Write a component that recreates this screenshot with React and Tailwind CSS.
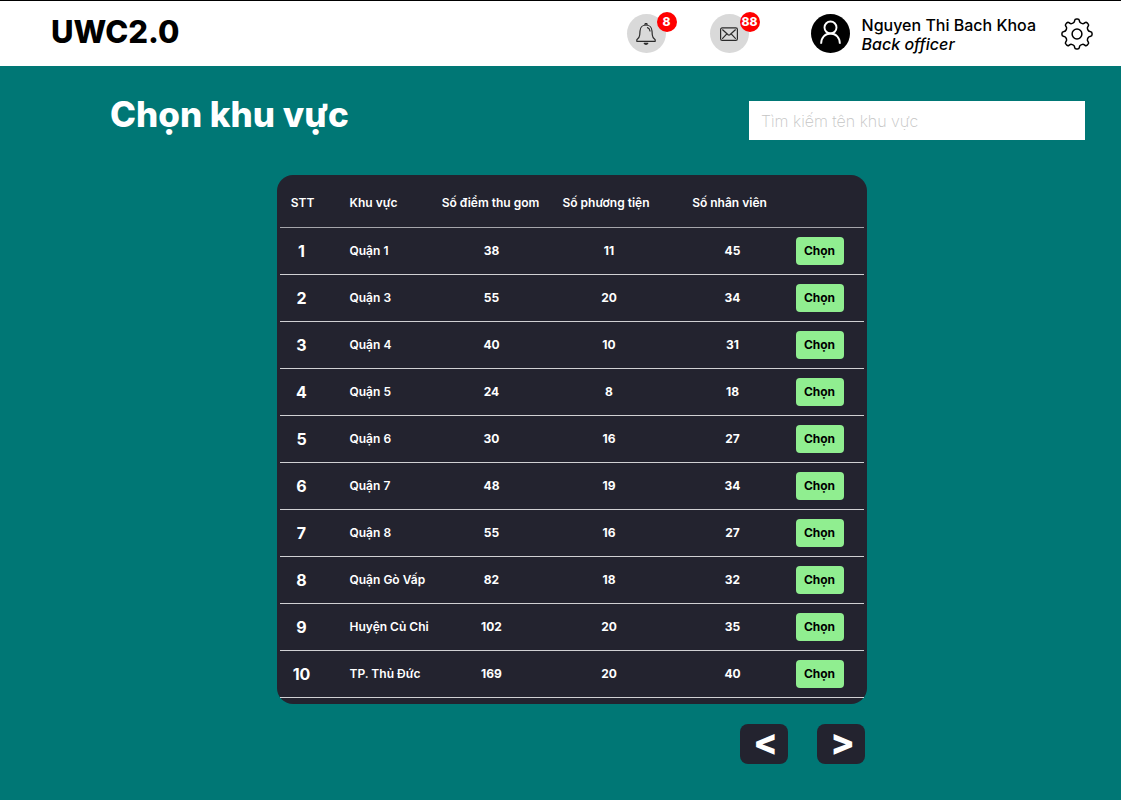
import React from "react";

const columns = ["Số điểm thu gom", "Số phương tiện", "Số nhân viên"];

const areas = [
  ["Quận 1", 38, 11, 45],
  ["Quận 3", 55, 20, 34],
  ["Quận 4", 40, 10, 31],
  ["Quận 5", 24, 8, 18],
  ["Quận 6", 30, 16, 27],
  ["Quận 7", 48, 19, 34],
  ["Quận 8", 55, 16, 27],
  ["Quận Gò Vấp", 82, 18, 32],
  ["Huyện Củ Chi", 102, 20, 35],
  ["TP. Thủ Đức", 169, 20, 40],
];

function BellIcon() {
  return (
    <svg viewBox="0 0 20 22" className="h-[22px] w-5" fill="none" stroke="#2b2b2b" strokeWidth="1.2" strokeLinejoin="round" strokeLinecap="round" aria-hidden="true">
      <path d="M9 1.900V1.300a1 1 0 0 1 2 0v.6" />
      <path d="M10 2C6.700 2 4.200 4.500 4 8l-.3 4C3.500 14.400 2.500 15.700.8 16.800v1.500h18.400v-1.500c-1.700-1.100-2.700-2.400-2.900-4.800L16 8c-.2-3.500-2.700-6-6-6Z" />
      <path d="M11.500 4.600c1.500.6 2.300 1.800 2.500 3.400" />
      <path d="M8.200 20.300c.6 1.300 3 1.300 3.600 0Z" />
    </svg>
  );
}

function MailIcon() {
  return (
    <svg viewBox="0 0 18 14" className="h-3.5 w-[18px]" fill="none" stroke="#2b2b2b" strokeWidth="1.2" strokeLinejoin="round" strokeLinecap="round" aria-hidden="true">
      <rect x=".6" y=".9" width="16.800" height="12.400" rx="1.600" />
      <path d="m2.600 2.800 5.500 5q.9.700 1.800 0l5.500-5M2.600 11.400l4-4.300M15.400 11.400l-4-4.300" />
    </svg>
  );
}

function UserIcon() {
  return (
    <svg viewBox="0 0 39 39" className="size-[39px] shrink-0" aria-hidden="true">
      <circle cx="19.500" cy="19.500" r="19.500" fill="#000" />
      <g fill="none" stroke="#fff" strokeWidth="1.900">
        <circle cx="19.500" cy="13.500" r="6" />
        <path d="M10.100 29.800c0-6.200 3.900-10.300 9.400-10.300s9.400 4.100 9.400 10.300" />
      </g>
    </svg>
  );
}

// Outline of an eight-toothed gear around (16, 16), with its corners rounded off.
function gearOutline() {
  const corners = [];
  for (let tooth = 0; tooth < 8; tooth += 1) {
    for (const [offset, radius] of [[-13, 11.8], [-8, 15.2], [8, 15.2], [13, 11.8]]) {
      const angle = ((tooth * 45 + offset) * Math.PI) / 180;
      corners.push([16 + radius * Math.cos(angle), 16 + radius * Math.sin(angle)]);
    }
  }
  const toward = (a, b, t) => `${(a[0] + (b[0] - a[0]) * t).toFixed(2)} ${(a[1] + (b[1] - a[1]) * t).toFixed(2)}`;
  return corners
    .map((corner, i) => {
      const previous = corners[(i + corners.length - 1) % corners.length];
      const next = corners[(i + 1) % corners.length];
      return `${i ? "L" : "M"}${toward(corner, previous, 0.4)}Q${toward(corner, corner, 0)} ${toward(corner, next, 0.4)}`;
    })
    .join("") + "Z";
}

function GearIcon() {
  return (
    <svg viewBox="0 0 32 32" className="size-8" fill="none" stroke="#000" strokeWidth="1.500" strokeLinejoin="round" aria-hidden="true">
      <path d={gearOutline()} />
      <circle cx="16" cy="16" r="4.900" />
    </svg>
  );
}

function NoticeButton({ label, count, children }) {
  return (
    <button type="button" aria-label={label} className="relative flex size-[39px] items-center justify-center rounded-full bg-[#d9d9d9]">
      {children}
      <span className="absolute -top-0.5 left-[30px] flex size-5 items-center justify-center rounded-full bg-[#ff0000] text-xs font-extrabold text-white">
        {count}
      </span>
    </button>
  );
}

function PagerButton({ label, children }) {
  return (
    <button type="button" aria-label={label} className="flex h-10 w-12 items-center justify-center rounded-lg bg-[#23232f] pb-1 pl-1 text-4xl leading-9 font-extrabold text-white">
      {children}
    </button>
  );
}

export default function App() {
  return (
    <div className="min-h-screen bg-[#007775] font-['Inter',sans-serif]">
      <header className="flex h-[66px] items-center justify-between border-t border-black bg-white pr-7 pl-[51px]">
        <div className="pb-1 text-[31px] leading-10 font-extrabold text-black">UWC2.0</div>
        <div className="flex items-center">
          <div className="flex gap-11">
            <NoticeButton label="Thông báo" count={8}><BellIcon /></NoticeButton>
            <NoticeButton label="Tin nhắn" count={88}><MailIcon /></NoticeButton>
          </div>
          <div className="ml-[62px] flex items-center gap-3">
            <UserIcon />
            <div className="pt-0.5 text-base leading-[19px] font-medium text-black">
              <p>Nguyen Thi Bach Khoa</p>
              <p className="italic">Back officer</p>
            </div>
          </div>
          <button type="button" aria-label="Cài đặt" className="ml-[25px]">
            <GearIcon />
          </button>
        </div>
      </header>

      <main className="pb-9">
        <div className="flex items-start justify-between pt-[35px] pr-9 pl-[110px]">
          <h1 className="-mt-2 text-[35px] leading-[42px] font-extrabold text-white">Chọn khu vực</h1>
          <input
            type="search"
            aria-label="Tìm kiếm tên khu vực"
            placeholder="Tìm kiếm tên khu vực"
            className="h-[39px] w-[336px] bg-white px-3 text-base font-extralight text-black outline-none placeholder:text-[#c4c4c4]"
          />
        </div>

        <div className="mt-[35px] flex justify-center pl-[22px]">
          <div className="w-[590px]">
            <div className="rounded-2xl bg-[#23232f] px-[3px] pb-1.5">
              <table className="w-full table-fixed border-collapse text-xs font-semibold text-white">
                <colgroup>
                  <col className="w-[46px]" />
                  <col className="w-[107px]" />
                  <col className="w-[116px]" />
                  <col className="w-[115px]" />
                  <col className="w-[132px]" />
                  <col />
                </colgroup>
                <thead>
                  <tr className="h-[52px] border-b border-[#a5a5ab]">
                    <th scope="col" className="pt-1 font-semibold">STT</th>
                    <th scope="col" className="pt-1 pl-6 text-left font-semibold">Khu vực</th>
                    {columns.map((name) => (
                      <th key={name} scope="col" className="pt-1 font-semibold whitespace-nowrap">{name}</th>
                    ))}
                    <td />
                  </tr>
                </thead>
                <tbody>
                  {areas.map(([name, points, vehicles, staff], i) => (
                    <tr key={name} className="h-[47px] border-b border-[#d0d0d3]">
                      <td className="pr-0.5 text-center text-base font-bold">{i + 1}</td>
                      <td className="pl-6 whitespace-nowrap">{name}</td>
                      <td className="pl-0.5 text-center font-bold">{points}</td>
                      <td className="pl-1.5 text-center font-bold">{vehicles}</td>
                      <td className="pl-1.5 text-center font-bold">{staff}</td>
                      <td>
                        <button type="button" aria-label={`Chọn ${name}`} className="block h-7 w-12 rounded bg-[#90ee90] font-bold text-black">
                          Chọn
                        </button>
                      </td>
                    </tr>
                  ))}
                </tbody>
              </table>
            </div>
            <nav aria-label="Phân trang" className="mt-5 flex justify-end gap-[29px] pr-0.5">
              <PagerButton label="Trang trước">&lt;</PagerButton>
              <PagerButton label="Trang sau">&gt;</PagerButton>
            </nav>
          </div>
        </div>
      </main>
    </div>
  );
}
